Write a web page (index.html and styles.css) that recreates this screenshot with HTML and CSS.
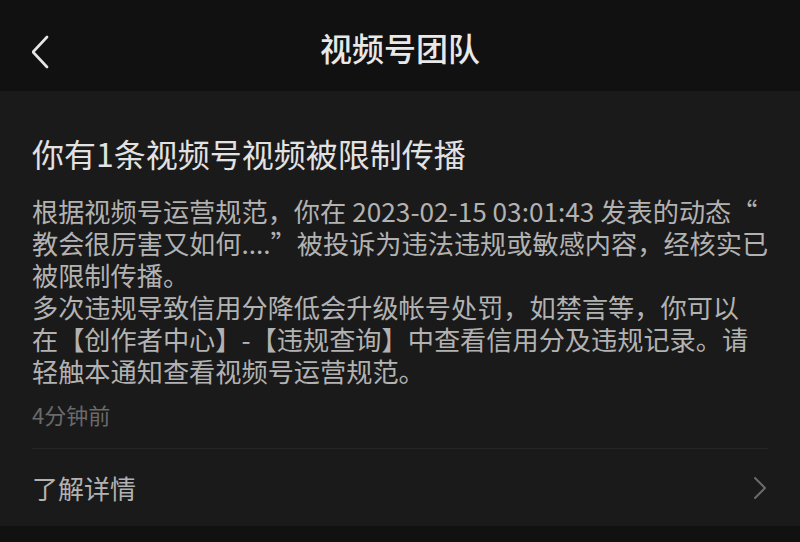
FILE: index.html
```html
<!DOCTYPE html>
<html lang="zh-CN">
<head>
    <meta charset="UTF-8">
    <meta name="viewport" content="width=device-width, initial-scale=1.0">
    <title>视频号团队</title>
    <link rel="stylesheet" href="styles.css">
</head>
<body>
    <div class="nav-bar">
        <span class="back-btn">
            <svg width="20" height="34" viewBox="0 0 20 34">
                <polyline points="15,2 1,17 15,32" fill="none" stroke="#e6e6e6" stroke-width="2.6" stroke-linecap="round" stroke-linejoin="round"/>
            </svg>
        </span>
        <h1 class="nav-title">视频号团队</h1>
    </div>

    <div class="notice-card">
        <h2 class="notice-title">你有1条视频号视频被限制传播</h2>
        <p class="notice-body">根据视频号运营规范，你在<span class="latin">2023-02-15 03:01:43</span>发表的动态“<br>教会很厉害又如何....”被投诉为违法违规或敏感内容，经核实已<br>被限制传播。<br>多次违规导致信用分降低会升级帐号处罚，如禁言等，你可以<br>在【创作者中心】-【违规查询】中查看信用分及违规记录。请<br>轻触本通知查看视频号运营规范。</p>
        <div class="notice-time">4分钟前</div>
        <div class="notice-link">
            <span>了解详情</span>
            <svg width="14" height="24" viewBox="0 0 14 24">
                <polyline points="2,2 12,12 2,22" fill="none" stroke="#6a6a6a" stroke-width="2" stroke-linecap="round" stroke-linejoin="round"/>
            </svg>
        </div>
    </div>
</body>
</html>
```

FILE: styles.css
```css
* {
    box-sizing: border-box;
    margin: 0;
    padding: 0;
}

body {
    background-color: #111111;
    font-family: "Noto Sans CJK SC", "Noto Sans", sans-serif;
    height: 542px;
    overflow: hidden;
}

.nav-bar {
    height: 91px;
    display: flex;
    align-items: center;
    justify-content: center;
    position: relative;
    background-color: #111111;
}

.back-btn {
    position: absolute;
    left: 32px;
    top: 35px;
    display: flex;
}

.nav-title {
    font-size: 32px;
    font-weight: 500;
    color: #e8e8e8;
    line-height: 40px;
    margin-top: 2px;
}

.notice-card {
    background-color: #1a1a1a;
    padding: 42px 32px 0;
}

.notice-title {
    font-size: 32px;
    font-weight: 400;
    line-height: 40px;
    color: #e2e2e2;
}

.notice-body {
    margin-top: 22px;
    font-size: 26.2px;
    line-height: 32px;
    color: #b2b2b2;
    white-space: nowrap;
}

.latin {
    margin: 0 6px;
}

.notice-time {
    margin-top: 13px;
    font-size: 22px;
    line-height: 28px;
    color: #6a6a6a;
    padding-bottom: 20px;
    border-bottom: 1px solid #262626;
}

.notice-link {
    height: 77px;
    display: flex;
    align-items: center;
    justify-content: space-between;
    font-size: 26px;
    color: #b2b2b2;
}

.notice-link svg {
    margin-right: 1px;
}
```
